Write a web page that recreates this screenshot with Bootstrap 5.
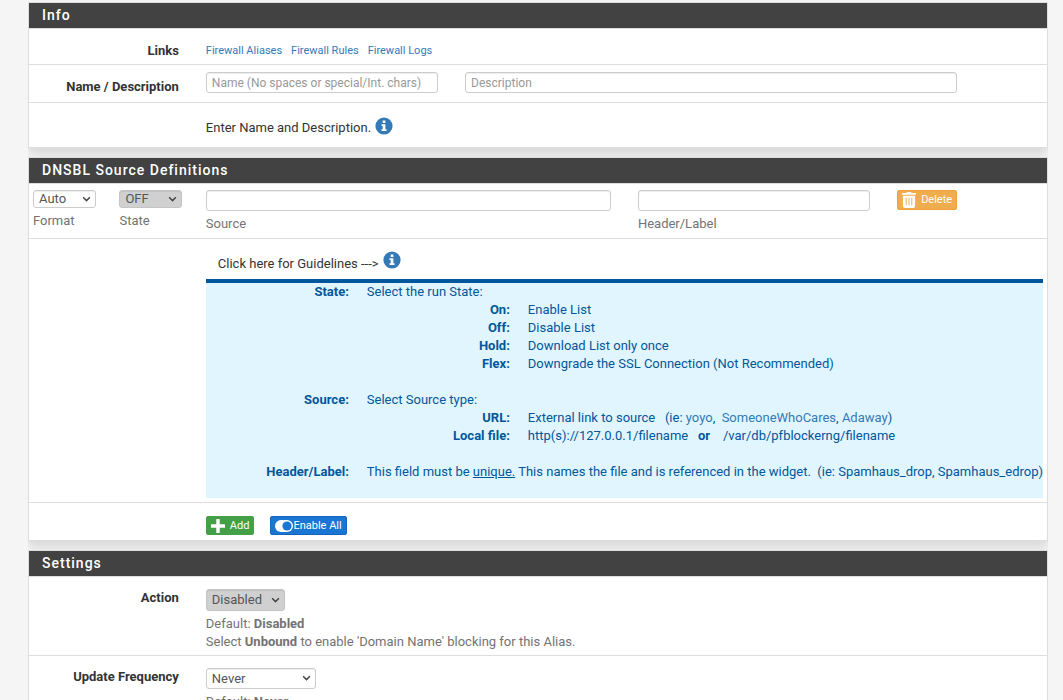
<!DOCTYPE html>
<html lang="en">
<head>
<meta charset="utf-8">
<meta name="viewport" content="width=device-width, initial-scale=1">
<title>DNSBL Group</title>
<link href="https://cdn.jsdelivr.net/npm/bootstrap@5.3.0/dist/css/bootstrap.min.css" rel="stylesheet">
<style>
body { background: #f5f5f5; color: #333; font: 13px/18px Roboto, sans-serif; }
main { margin: 0 15px 0 28px; padding-top: 2px; overflow-x: clip; }
a { color: #337ab7; text-decoration: none; }
.panel { background: #fff; border: 1px solid #ddd; margin-bottom: 9px; box-shadow: 0 6px 10px rgba(0,0,0,.12); overflow: hidden; }
.panel-title { background: #424242; color: #fff; font-size: 14px; font-weight: 500; line-height: 17px; letter-spacing: 1px; padding: 4px 13px; margin: 0; }
.form-line { --bs-gutter-x: 0; margin-right: -19px; border-top: 1px solid #ddd; }
.form-line > * { padding-left: 4px; padding-right: 23px; }
.line-label { text-align: right; font-weight: 700; }
.form-control, .form-select { border: 1px solid #ccc; border-radius: 3px; font-size: 13px; line-height: 18px; color: #555; padding: 0 5px; height: 21px; min-height: 0; box-shadow: inset 0 1px 1px rgba(0,0,0,.075); }
.form-control::placeholder { color: #999; font-size: 12px; }
.form-select { width: auto; background: #fff url("data:image/svg+xml,%3Csvg xmlns='http://www.w3.org/2000/svg' viewBox='0 0 8 6'%3E%3Cpath d='M1 1l3 3 3-3' fill='none' stroke='%23444' stroke-width='1.3'/%3E%3C/svg%3E") no-repeat right 4px center / 9px 7px; }
.select-short { height: 18px; line-height: 16px; width: 63px; }
.select-grey { background-color: #d0d0d0; border-color: #c4c4c4; }
.select-action { width: 79px; height: 22px; }
.select-update { width: 110px; }
.help { color: #737373; }
.btn { font-size: 11px; line-height: 17px; padding: 0 4px; border-radius: 2px; color: #fff; gap: 5px; }
.btn-delete, .btn-delete:hover { background: #f0ad4e; border-color: #eea236; color: #fff; line-height: 18px; }
.btn-add, .btn-add:hover { background: #43a047; border-color: #43a047; color: #fff; }
.btn-enable, .btn-enable:hover { background: #1976d2; border-color: #1565c0; color: #fff; gap: 0; }
.small-links { font-size: 11px; gap: 9px; }
.info-btn { border: 0; background: none; padding: 0; line-height: 0; }
.guide { background: #e1f5fe; color: #01579b; border-top: 4px solid #01579b; padding-bottom: 17px; margin: 6px 0 4px; }
.guide dl { display: grid; grid-template-columns: 143px 1fr; column-gap: 18px; margin: 0; }
.guide > dl { row-gap: 18px; }
.guide dt { text-align: right; }
.guide dd { margin: 0; }
.guide dt, .guide dd { white-space: nowrap; }
.pad-links { padding-top: 13px; padding-bottom: 4px; }
.pad-name { padding-top: 7px; padding-bottom: 6px; }
.pad-name > .line-label { padding-top: 6px; }
.pad-enter { padding-top: 14px; padding-bottom: 10px; }
.enter-text { padding-top: 2px; }
.pad-source { padding-top: 6px; padding-bottom: 5px; }
.pad-buttons { padding-top: 13px; padding-bottom: 5px; }
.pad-setting { padding-top: 12px; padding-bottom: 4px; }
</style>
</head>
<body>
<main>
  <section class="panel">
    <h2 class="panel-title">Info</h2>
    <div class="row form-line pad-links">
      <div class="col-2 line-label">Links</div>
      <div class="col-10 d-flex small-links"><a href="#">Firewall Aliases</a><a href="#">Firewall Rules</a><a href="#">Firewall Logs</a></div>
    </div>
    <div class="row form-line pad-name">
      <label class="col-2 line-label" for="name">Name / Description</label>
      <div class="col-3"><input class="form-control" id="name" type="text" placeholder="Name (No spaces or special/Int. chars)"></div>
      <div class="col-6"><input class="form-control" type="text" placeholder="Description" aria-label="Description"></div>
    </div>
    <div class="row form-line pad-enter">
      <div class="col-10 offset-2 d-flex">
        <span class="enter-text me-1">Enter Name and Description.</span>
        <button class="info-btn align-self-start" type="button" aria-label="Show info"><svg width="18" height="18" viewBox="0 0 18 18"><circle cx="9" cy="9" r="8.6" fill="#337ab7"/><path fill="#fff" d="M7.7 3.6h2.7V6H7.7zM6.5 7.3h3.9v5h1.2V14H6.5v-1.7h1.2V9H6.5z"/></svg></button>
      </div>
    </div>
  </section>

  <section class="panel">
    <h2 class="panel-title">DNSBL Source Definitions</h2>
    <div class="row form-line pad-source help">
      <div class="col-1"><select class="form-select select-short" id="format"><option>Auto</option></select><label class="mt-1" for="format">Format</label></div>
      <div class="col-1"><select class="form-select select-short select-grey" id="state"><option>OFF</option></select><label class="mt-1" for="state">State</label></div>
      <div class="col-5"><input class="form-control" type="text" id="source"><label class="mt-1" for="source">Source</label></div>
      <div class="col-3"><input class="form-control" type="text" id="header"><label class="mt-1" for="header">Header/Label</label></div>
      <div class="col-2"><button class="btn btn-delete d-flex align-items-center" type="button"><svg width="14" height="16" viewBox="0 0 15 17"><path fill="#fff" fill-rule="evenodd" d="M5 0h5v1h5v2H0V1h5zM1 4h13v11q0 2-2 2H3q-2 0-2-2zM4 6v8h1V6zM7 6v8h1V6zM10 6v8h1V6z"/></svg>Delete</button></div>
    </div>
    <div class="row form-line">
      <div class="col-10 offset-2">
        <div class="d-flex ps-1 ms-2 pt-2 mt-1">
          <span class="pt-1 me-1">Click here for Guidelines ---&gt;</span>
          <button class="info-btn align-self-start" type="button" aria-label="Show guidelines"><svg width="18" height="18" viewBox="0 0 18 18"><circle cx="9" cy="9" r="8.6" fill="#337ab7"/><path fill="#fff" d="M7.7 3.6h2.7V6H7.7zM6.5 7.3h3.9v5h1.2V14H6.5v-1.7h1.2V9H6.5z"/></svg></button>
        </div>
        <div class="guide">
          <dl>
            <dt>State:</dt>
            <dd>Select the run State:
              <dl>
                <dt>On:</dt><dd>Enable List</dd>
                <dt>Off:</dt><dd>Disable List</dd>
                <dt>Hold:</dt><dd>Download List only once</dd>
                <dt>Flex:</dt><dd>Downgrade the SSL Connection (Not Recommended)</dd>
              </dl>
            </dd>
            <dt>Source:</dt>
            <dd>Select Source type:
              <dl>
                <dt>URL:</dt><dd>External link to source &nbsp; (ie: <a href="#">yoyo</a>,&nbsp; <a href="#">SomeoneWhoCares</a>, <a href="#">Adaway</a>)</dd>
                <dt>Local file:</dt><dd>http(s)://127.0.0.1/filename &nbsp; <strong>or</strong> &nbsp;&nbsp; /var/db/pfblockerng/filename</dd>
              </dl>
            </dd>
            <dt>Header/Label:</dt>
            <dd>This field must be <u>unique.</u> This names the file and is referenced in the widget.&nbsp; (ie: Spamhaus_drop, Spamhaus_edrop)</dd>
          </dl>
        </div>
      </div>
    </div>
    <div class="row form-line pad-buttons">
      <div class="col-10 offset-2 d-flex">
        <button class="btn btn-add d-flex align-items-center me-3" type="button"><svg width="14" height="14" viewBox="0 0 14 14"><path fill="#fff" d="M5.3 0h3.4v5.3H14v3.4H8.7V14H5.3V8.7H0V5.3h5.3z"/></svg>Add</button>
        <button class="btn btn-enable d-flex align-items-center" type="button"><svg width="18" height="12" viewBox="0 0 18 12"><rect width="18" height="12" rx="6" fill="#fff"/><circle cx="12" cy="6" r="4.6" fill="#1976d2"/></svg>Enable All</button>
      </div>
    </div>
  </section>

  <section class="panel">
    <h2 class="panel-title">Settings</h2>
    <div class="row form-line pad-setting">
      <label class="col-2 line-label" for="action">Action</label>
      <div class="col-10">
        <select class="form-select select-grey select-action" id="action"><option>Disabled</option></select>
        <div class="help mt-1">Default: <strong>Disabled</strong><br>Select <strong>Unbound</strong> to enable 'Domain Name' blocking for this Alias.</div>
      </div>
    </div>
    <div class="row form-line pad-setting">
      <label class="col-2 line-label" for="update">Update Frequency</label>
      <div class="col-10">
        <select class="form-select select-update" id="update"><option>Never</option></select>
        <div class="help mt-1">Default: <strong>Never</strong></div>
      </div>
    </div>
  </section>
</main>
<script src="https://cdn.jsdelivr.net/npm/bootstrap@5.3.0/dist/js/bootstrap.bundle.min.js"></script>
</body>
</html>
